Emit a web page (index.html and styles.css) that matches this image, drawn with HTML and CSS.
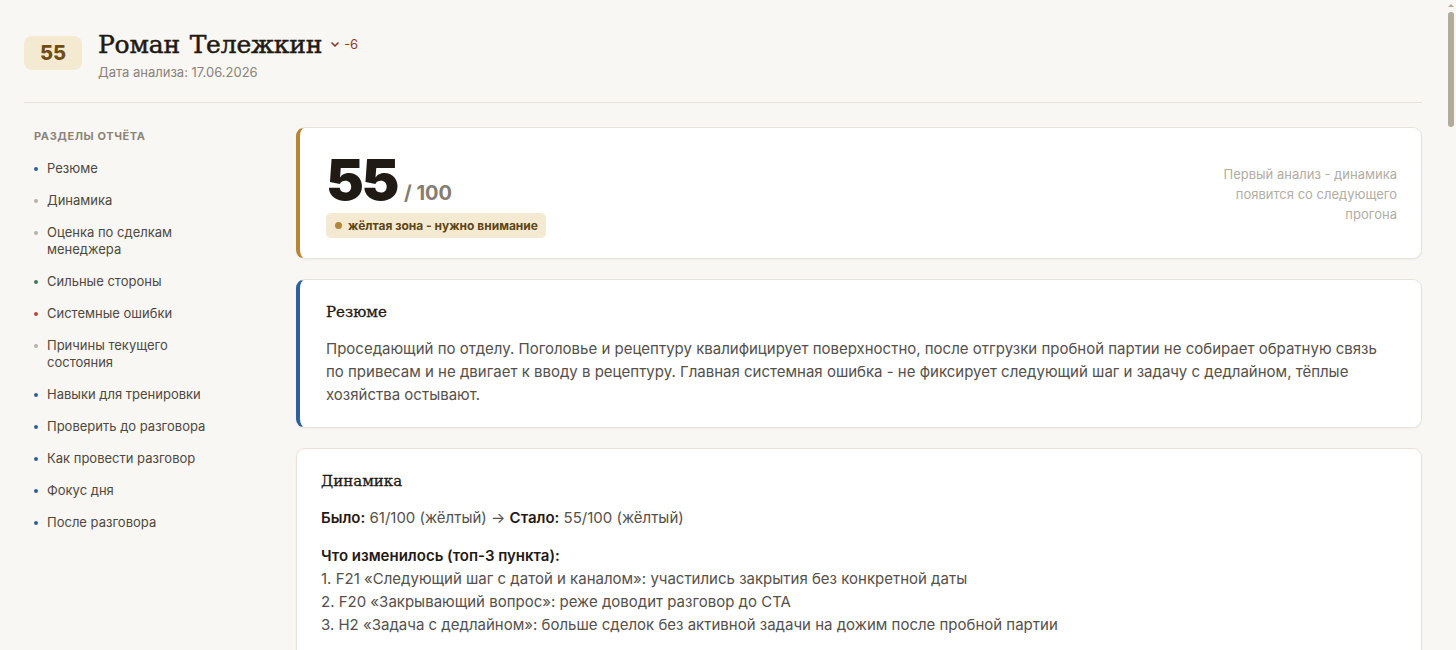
FILE: index.html
```html
<!DOCTYPE html>
<html lang="ru">
    <head>
        <meta charset="UTF-8" />
        <meta name="viewport" content="width=device-width, initial-scale=1.0" />
        <title>Отчёт по менеджеру</title>
        <link rel="stylesheet" href="styles.css">
    </head>
    <body>
        <div class="page">
            <div class="head">
                <div class="head-score">55</div>
                <div class="head-info">
                    <div class="head-name">
                        <h1>Роман Тележкин</h1>
                        <span class="delta">
                            <svg width="10" height="7" viewBox="0 0 10 7"><path d="M2 2 L5 5 L8 2" fill="none" stroke="#8e3a2a" stroke-width="1.7" stroke-linecap="round" stroke-linejoin="round"/></svg>
                            -6
                        </span>
                    </div>
                    <div class="head-date">Дата анализа: 17.06.2026</div>
                </div>
            </div>

            <div class="layout">
                <div class="side">
                    <div class="side-title">Разделы отчёта</div>
                    <ul class="side-list">
                        <li class="blue">Резюме</li>
                        <li class="grey">Динамика</li>
                        <li class="grey">Оценка по сделкам менеджера</li>
                        <li class="green">Сильные стороны</li>
                        <li class="red">Системные ошибки</li>
                        <li class="grey">Причины текущего состояния</li>
                        <li class="blue">Навыки для тренировки</li>
                        <li class="blue">Проверить до разговора</li>
                        <li class="blue">Как провести разговор</li>
                        <li class="blue">Фокус дня</li>
                        <li class="blue">После разговора</li>
                    </ul>
                </div>

                <div class="main">
                    <div class="card card-score">
                        <div class="score-left">
                            <div class="score-num">55<span>/ 100</span></div>
                            <div class="zone"><i></i>жёлтая зона - нужно внимание</div>
                        </div>
                        <div class="score-note">Первый анализ - динамика<br>появится со следующего<br>прогона</div>
                    </div>

                    <div class="card card-blue">
                        <h2>Резюме</h2>
                        <p>Проседающий по отделу. Поголовье и рецептуру квалифицирует поверхностно, после отгрузки пробной партии не собирает обратную связь по привесам и не двигает к вводу в рецептуру. Главная системная ошибка - не фиксирует следующий шаг и задачу с дедлайном, тёплые хозяйства остывают.</p>
                    </div>

                    <div class="card">
                        <h2>Динамика</h2>
                        <p><b>Было:</b> 61/100 (жёлтый) → <b>Стало:</b> 55/100 (жёлтый)</p>
                        <p class="gap"><b>Что изменилось (топ-3 пункта):</b><br>
                        1. F21 «Следующий шаг с датой и каналом»: участились закрытия без конкретной даты<br>
                        2. F20 «Закрывающий вопрос»: реже доводит разговор до CTA<br>
                        3. H2 «Задача с дедлайном»: больше сделок без активной задачи на дожим после пробной партии</p>
                        <p class="gap"><b>Что не изменилось:</b><br>
                        Квалификация поголовья и рецептуры остаётся поверхностной.</p>
                    </div>

                    <div class="card">
                        <h2>Оценка по сделкам менеджера</h2>
                        <p>Разобрано 14 сделок за период. В 9 из них нет зафиксированного следующего шага.</p>
                    </div>

                    <div class="card card-green">
                        <h2>Сильные стороны</h2>
                        <p>Быстро выходит на контакт, уверенно презентует продукт, хорошо знает ассортимент.</p>
                    </div>

                    <div class="card card-red">
                        <h2>Системные ошибки</h2>
                        <p>Не фиксирует следующий шаг и задачу с дедлайном. Не собирает обратную связь по привесам.</p>
                    </div>
                </div>
            </div>
        </div>

        <!-- полоса прокрутки страницы -->
        <div class="scroll">
            <span class="scroll-up"></span>
            <span class="scroll-thumb"></span>
        </div>
    </body>
</html>
```

FILE: styles.css
```css
html{
    background-color: #f9f7f3;
}

body{
    margin: 0;
    padding: 0;
    font-family: Inter, "Noto Sans", sans-serif;
    color: #2b2620;
    min-height: 1200px;
}

.page{
    padding: 0 34px 0 24px;
}

/* шапка */
.head{
    display: flex;
    align-items: flex-start;
    gap: 16px;
    padding: 28px 0 22px;
    border-bottom: 1px solid #e6e0d6;
}

.head-score{
    margin-top: 8px;
    width: 58px;
    height: 34px;
    line-height: 34px;
    text-align: center;
    background-color: #f4ead2;
    border-radius: 8px;
    font-size: 20px;
    font-weight: 800;
    color: #6e4e16;
}

.head-name{
    display: flex;
    align-items: center;
    gap: 8px;
}

.head-name h1{
    margin: 0;
    font-family: "DejaVu Serif", serif;
    font-weight: 400;
    font-size: 25px;
    line-height: 34px;
    letter-spacing: -0.2px;
    word-spacing: 2px;
    color: #1f1a14;
    -webkit-text-stroke: 0.5px #1f1a14;
}

.delta{
    display: flex;
    align-items: center;
    gap: 4px;
    font-size: 13px;
    color: #8e3a2a;
    margin-top: -2px;
}

.head-date{
    margin-top: 2px;
    font-size: 13px;
    color: #8a8378;
}

/* основная сетка */
.layout{
    display: grid;
    grid-template-columns: 272px 1fr;
    padding-top: 24px;
}

.side{
    padding: 2px 10px 0;
}

.side-title{
    font-size: 11px;
    font-weight: 700;
    letter-spacing: 0.6px;
    text-transform: uppercase;
    color: #8c8377;
    margin-bottom: 17px;
}

.side-list{
    margin: 0;
    padding: 0;
    list-style: none;
    display: flex;
    flex-direction: column;
    gap: 15px;
    width: 195px;
}

.side-list li{
    position: relative;
    padding-left: 13px;
    font-size: 13px;
    line-height: 17px;
    color: #4e4840;
}

.side-list li::before{
    content: "";
    position: absolute;
    left: 0;
    top: 7px;
    width: 4px;
    height: 4px;
    border-radius: 50%;
    background-color: #b9b2a8;
}

.side-list li.blue::before{ background-color: #2f5f9e; }
.side-list li.green::before{ background-color: #3c7a55; }
.side-list li.red::before{ background-color: #b8473a; }

.main{
    display: flex;
    flex-direction: column;
    gap: 20px;
}

.card{
    background-color: #ffffff;
    border: 1px solid #e8e3da;
    border-radius: 9px;
    padding: 21px 24px 21px;
    box-shadow: 0 1px 2px rgba(60, 50, 30, 0.05);
}

.card-score,
.card-blue,
.card-green,
.card-red{
    border-left: 4px solid #b5853a;
    padding-left: 26px;
}
.card-blue{ border-left-color: #2f5f9e; }
.card-green{ border-left-color: #3c7a55; }
.card-red{ border-left-color: #b8473a; }

.card h2{
    margin: 0 0 14px;
    font-family: "DejaVu Serif", serif;
    font-weight: 400;
    font-size: 15px;
    line-height: 22px;
    color: #1f1a14;
    -webkit-text-stroke: 0.3px #1f1a14;
}

.card p{
    margin: 0;
    font-size: 15px;
    line-height: 23px;
    color: #55504a;
}

.card p b{
    color: #1f1a14;
    font-weight: 600;
}

.card p.gap{
    margin-top: 15px;
}

/* карточка балла */
.card-score{
    display: flex;
    justify-content: space-between;
    padding-top: 24px;
    padding-bottom: 20px;
    padding-right: 24px;
}

.score-num{
    height: 56px;
    font-size: 57px;
    font-weight: 900;
    line-height: 56px;
    letter-spacing: -2.5px;
    color: #1f1a14;
}

.score-num span{
    margin-left: 7px;
    font-size: 20px;
    font-weight: 700;
    line-height: 1;
    letter-spacing: 0;
    color: #857d72;
}

.zone{
    display: inline-flex;
    align-items: center;
    gap: 6px;
    margin-top: 5px;
    padding: 0 8px 0 9px;
    height: 25px;
    background-color: #f4ead2;
    border-radius: 5px;
    font-size: 12px;
    font-weight: 700;
    color: #5e4516;
}

.zone i{
    width: 7px;
    height: 7px;
    border-radius: 50%;
    background-color: #b5853a;
}

.score-note{
    padding-top: 12px;
    text-align: right;
    font-size: 13px;
    line-height: 20px;
    color: #b3aca2;
}

/* полоса прокрутки поверх правого края */
.scroll{
    position: fixed;
    top: 0;
    right: 0;
    width: 10px;
    height: 100%;
    background-color: #f9f7f3;
}

.scroll-up{
    position: absolute;
    top: 4px;
    left: 2px;
    border-left: 3px solid transparent;
    border-right: 3px solid transparent;
    border-bottom: 3px solid #b3aa9c;
}

.scroll-thumb{
    position: absolute;
    top: 12px;
    left: 2px;
    width: 6px;
    height: 115px;
    border-radius: 3px;
    background-color: #b3aa9c;
}
```
